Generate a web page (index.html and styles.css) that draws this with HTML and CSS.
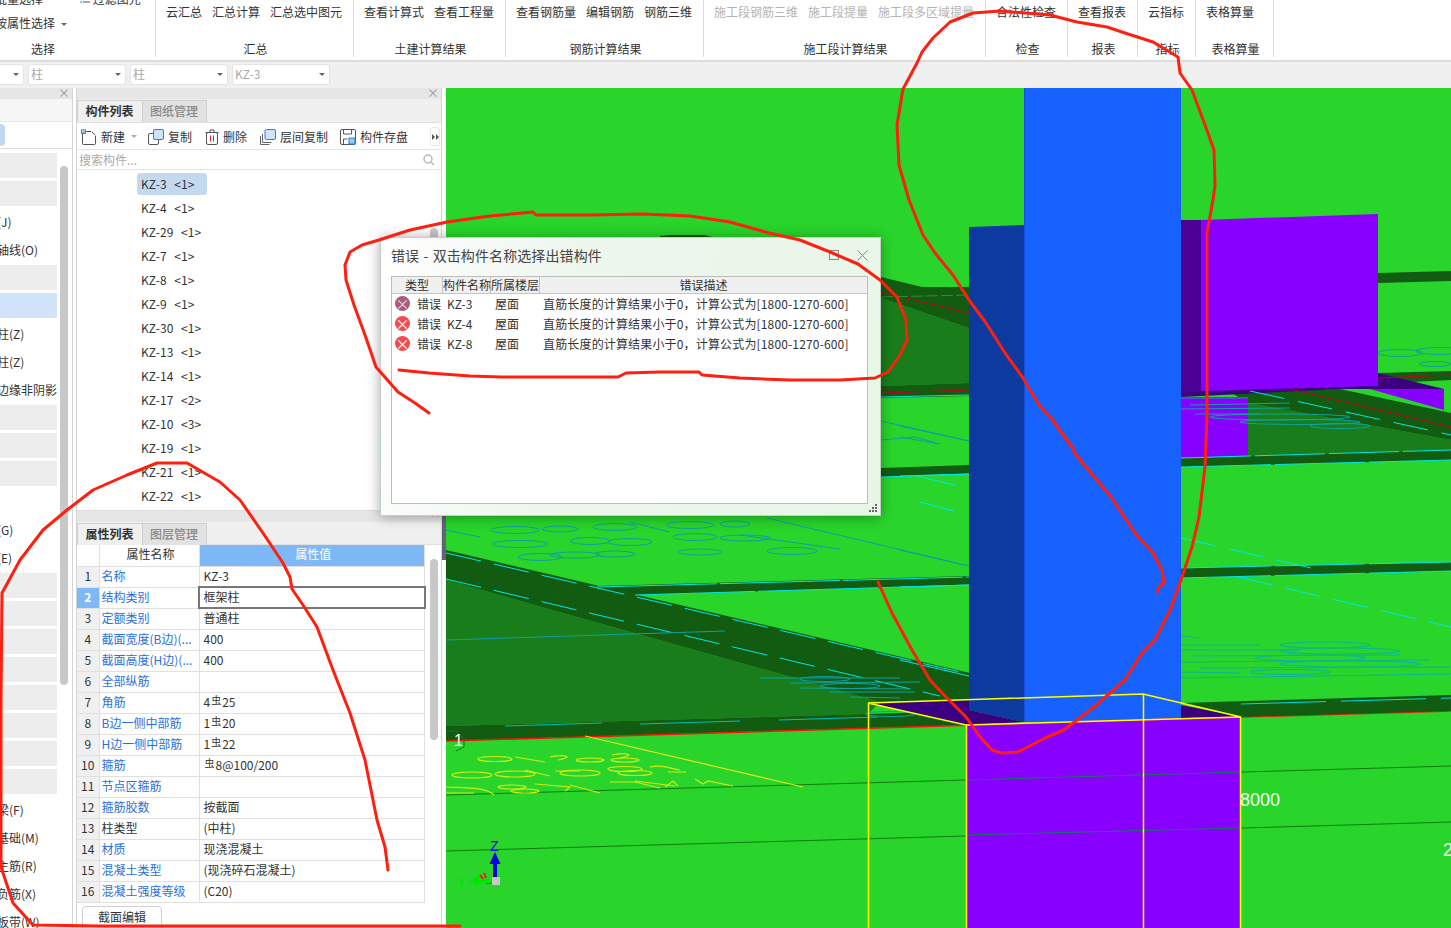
FILE: index.html
```html
<!DOCTYPE html>
<html lang="zh-CN">
<head>
<meta charset="utf-8">
<title>错误 - 双击构件名称选择出错构件</title>
<link rel="stylesheet" href="styles.css">
</head>
<body>
<div class="app">
  <header class="ribbon">
    <section class="group group-select">
      <div class="select-body">
        <div class="sel-col">
          <span class="clip-top">批量选择</span>
          <span>按属性选择 <i class="mini-caret"></i></span>
        </div>
        <div class="sel-col sel-col2">
          <span class="clip-top"><svg class="filter-ico" width="10" height="10" viewBox="0 0 10 10"><path d="M0 1h2M0 4h2M0 7h2" stroke="#2a7de1" fill="none"/><path d="M3 1h7M3 4h7M3 7h7" stroke="#555" fill="none"/></svg>过滤图元</span>
        </div>
      </div>
      <div class="group-label">选择</div>
    </section>
    <section class="group g-sum">
      <div class="group-body"><span>云汇总</span><span>汇总计算</span><span>汇总选中图元</span></div>
      <div class="group-label">汇总</div>
    </section>
    <section class="group g-civil">
      <div class="group-body"><span>查看计算式</span><span>查看工程量</span></div>
      <div class="group-label">土建计算结果</div>
    </section>
    <section class="group g-rebar">
      <div class="group-body"><span>查看钢筋量</span><span>编辑钢筋</span><span>钢筋三维</span></div>
      <div class="group-label">钢筋计算结果</div>
    </section>
    <section class="group g-stage">
      <div class="group-body disabled"><span>施工段钢筋三维</span><span>施工段提量</span><span>施工段多区域提量</span></div>
      <div class="group-label">施工段计算结果</div>
    </section>
    <section class="group g-check">
      <div class="group-body"><span>合法性检查</span></div>
      <div class="group-label">检查</div>
    </section>
    <section class="group g-report">
      <div class="group-body"><span>查看报表</span></div>
      <div class="group-label">报表</div>
    </section>
    <section class="group g-index">
      <div class="group-body"><span>云指标</span></div>
      <div class="group-label">指标</div>
    </section>
    <section class="group g-table">
      <div class="group-body"><span>表格算量</span></div>
      <div class="group-label">表格算量</div>
    </section>
  </header>

  <div class="filterbar">
    <div class="combo combo-first"><i class="mini-caret"></i></div>
    <div class="combo"><span>柱</span><i class="mini-caret"></i></div>
    <div class="combo"><span>柱</span><i class="mini-caret"></i></div>
    <div class="combo"><span>KZ-3</span><i class="mini-caret"></i></div>
  </div>

  <div class="main">
    <aside class="nav">
      <div class="panel-head"><span class="close">×</span></div>
      <div class="nav-strip"></div>
      <div class="nav-search"><div class="nav-pill"></div></div>
      <div class="nav-list">
        <div class="nav-row grey"></div>
        <div class="nav-row grey"></div>
        <div class="nav-row">轴网(J)</div>
        <div class="nav-row">辅助轴线(O)</div>
        <div class="nav-row grey"></div>
        <div class="nav-row active"></div>
        <div class="nav-row">构造柱(Z)</div>
        <div class="nav-row">砌体柱(Z)</div>
        <div class="nav-row">约束边缘非阴影区</div>
        <div class="nav-row grey"></div>
        <div class="nav-row grey"></div>
        <div class="nav-row grey"></div>
        <div class="nav-row"></div>
        <div class="nav-row">过梁(G)</div>
        <div class="nav-row">圈梁(E)</div>
        <div class="nav-row grey"></div>
        <div class="nav-row grey"></div>
        <div class="nav-row grey"></div>
        <div class="nav-row grey"></div>
        <div class="nav-row grey"></div>
        <div class="nav-row grey"></div>
        <div class="nav-row grey"></div>
        <div class="nav-row grey"></div>
        <div class="nav-row">基础梁(F)</div>
        <div class="nav-row">筏板基础(M)</div>
        <div class="nav-row">筏板主筋(R)</div>
        <div class="nav-row">筏板负筋(X)</div>
        <div class="nav-row">基础板带(W)</div>
      </div>
      <div class="thumb nav-thumb"></div>
    </aside>

    <div class="panels">
      <section class="panel panel-list">
        <div class="panel-head"><span class="close">×</span></div>
        <div class="tabs">
          <div class="tab on">构件列表</div>
          <div class="tab">图纸管理</div>
        </div>
        <div class="toolbar">
          <span class="tool tool-new">
            <svg width="16" height="17" viewBox="0 0 16 17"><path d="M1.5 3.5h9l4 4v8a1 1 0 0 1-1 1h-11a1 1 0 0 1-1-1z" fill="#fff" stroke="#555"/><path d="M10.5 3.5v4h4" fill="none" stroke="#fff"/><rect x="0" y="1" width="5" height="5" fill="#3f8ef0"/><path d="M1 2h1M3 2h1M2 3h1M1 4h1M3 4h1" stroke="#fff"/></svg>
            新建<i class="mini-caret pale"></i>
          </span>
          <span class="tool tool-copy">
            <svg width="16" height="16" viewBox="0 0 16 16"><rect x=".5" y="4.5" width="10" height="11" rx="1.5" fill="#fff" stroke="#555"/><rect x="5.5" y=".5" width="10" height="10" rx="1.5" fill="#cfe3fb" stroke="#2a7de1"/></svg>
            复制
          </span>
          <span class="tool tool-del">
            <svg width="14" height="16" viewBox="0 0 14 16"><path d="M.5 3.5h13M5 3.5V1h4v2.500" fill="none" stroke="#555"/><rect x="1.500" y="3.500" width="11" height="12" rx="1.500" fill="#fff" stroke="#555"/><path d="M5.500 6.500v6M8.500 6.500v6" stroke="#e02020"/></svg>
            删除
          </span>
          <span class="tool tool-floor">
            <svg width="16" height="16" viewBox="0 0 16 16"><path d="M.5 7v8.500h9M2.500 5v8.500h9" fill="none" stroke="#666"/><rect x="5" y=".5" width="10.500" height="10" rx="1.500" fill="#cfe3fb" stroke="#2a7de1"/></svg>
            层间复制
          </span>
          <span class="tool tool-save">
            <svg width="16" height="16" viewBox="0 0 16 16"><rect x=".5" y=".5" width="15" height="15" rx="1.500" fill="#fff" stroke="#555"/><path d="M3.500 1v4h8V1M3.500 15v-5h4" fill="none" stroke="#555"/><rect x="9" y="9" width="6" height="6" fill="#9cc6f5" stroke="#2a7de1"/></svg>
            构件存盘
          </span>
          <span class="more-btn"><svg width="7" height="6" viewBox="0 0 7 6"><path d="M0 0l3 3-3 3zM4 0l3 3-3 3z" fill="#555"/></svg></span>
        </div>
        <div class="search">
          <span>搜索构件...</span>
          <svg width="12" height="12" viewBox="0 0 12 12"><circle cx="5" cy="5" r="4" fill="none" stroke="#b5b5b5" stroke-width="1.400"/><path d="M8 8l3 3" stroke="#b5b5b5" stroke-width="1.400"/></svg>
        </div>
        <ul class="kz-list">
          <li class="sel">KZ-3  &lt;1&gt;</li>
          <li>KZ-4  &lt;1&gt;</li>
          <li>KZ-29  &lt;1&gt;</li>
          <li>KZ-7  &lt;1&gt;</li>
          <li>KZ-8  &lt;1&gt;</li>
          <li>KZ-9  &lt;1&gt;</li>
          <li>KZ-30  &lt;1&gt;</li>
          <li>KZ-13  &lt;1&gt;</li>
          <li>KZ-14  &lt;1&gt;</li>
          <li>KZ-17  &lt;2&gt;</li>
          <li>KZ-10  &lt;3&gt;</li>
          <li>KZ-19  &lt;1&gt;</li>
          <li>KZ-21  &lt;1&gt;</li>
          <li>KZ-22  &lt;1&gt;</li>
        </ul>
        <div class="thumb list-thumb"></div>
      </section>

      <section class="panel panel-props">
        <div class="panel-head"><span class="caret-up"></span></div>
        <div class="tabs tabs-props">
          <div class="tab on">属性列表</div>
          <div class="tab">图层管理</div>
        </div>
        <table class="props">
          <thead>
            <tr><th class="num"></th><th class="pname">属性名称</th><th class="pval">属性值</th></tr>
          </thead>
          <tbody>
            <tr><td class="num">1</td><td class="link">名称</td><td>KZ-3</td></tr>
            <tr class="cur"><td class="num">2</td><td class="link">结构类别</td><td class="edit">框架柱</td></tr>
            <tr><td class="num">3</td><td class="link">定额类别</td><td>普通柱</td></tr>
            <tr><td class="num">4</td><td class="link">截面宽度(B边)(...</td><td>400</td></tr>
            <tr><td class="num">5</td><td class="link">截面高度(H边)(...</td><td>400</td></tr>
            <tr><td class="num">6</td><td class="link">全部纵筋</td><td></td></tr>
            <tr><td class="num">7</td><td class="link">角筋</td><td>4<sup>虫</sup>25</td></tr>
            <tr><td class="num">8</td><td class="link">B边一侧中部筋</td><td>1<sup>虫</sup>20</td></tr>
            <tr><td class="num">9</td><td class="link">H边一侧中部筋</td><td>1<sup>虫</sup>22</td></tr>
            <tr><td class="num">10</td><td class="link">箍筋</td><td><sup>虫</sup>8@100/200</td></tr>
            <tr><td class="num">11</td><td class="link">节点区箍筋</td><td></td></tr>
            <tr><td class="num">12</td><td class="link">箍筋胶数</td><td>按截面</td></tr>
            <tr><td class="num">13</td><td>柱类型</td><td>(中柱)</td></tr>
            <tr><td class="num">14</td><td class="link">材质</td><td>现浇混凝土</td></tr>
            <tr><td class="num">15</td><td class="link">混凝土类型</td><td>(现浇碎石混凝土)</td></tr>
            <tr><td class="num">16</td><td class="link">混凝土强度等级</td><td>(C20)</td></tr>
          </tbody>
        </table>
        <div class="thumb props-thumb"></div>
        <div class="props-foot"><button class="sec-btn">截面编辑</button></div>
      </section>
    </div>

    <div class="gap"><div class="gap-mark"></div></div>

    <div class="viewport">
      <svg class="scene" width="1005" height="840" viewBox="446 88 1005 840">
        <rect x="446" y="88" width="1005" height="840" fill="#29d42b"/>
        <!-- slabs and beams -->
        <polygon points="660,236 670,235 705,235 712,237 660,237" fill="#125c11"/>
        <polygon points="446,580 880,702 868,714 446,726" fill="#187d1a"/>
        <polygon points="446,550 970,673 970,700 880,702 446,580" fill="#125c11"/>
        <polygon points="446,726 970,711 970,725 446,741" fill="#125c11"/>
        <polygon points="597,586 970,576 970,585 635,595" fill="#125c11"/>
        <polygon points="1181,568 1451,562 1451,571 1181,578" fill="#125c11"/>
        <polygon points="881,298 969,328 969,383 881,386" fill="#187d1a"/>
        <polygon points="881,277 922,287 969,287 969,328 881,298" fill="#125c11"/>
        <polygon points="881,386 969,383 969,396 881,398" fill="#125c11"/>
        <polygon points="881,468 969,465 969,474 881,477" fill="#125c11"/>
        <polygon points="1378,273 1451,271 1451,281 1378,283" fill="#125c11"/>
        <polygon points="1378,373 1451,371 1451,380 1410,382" fill="#125c11"/>
        <polygon points="1248,403 1451,440 1451,450 1248,457" fill="#187d1a"/>
        <polygon points="1181,458 1451,450 1451,460 1181,467" fill="#125c11"/>
        <polygon points="1230,392 1340,389 1451,413 1451,440 1248,403" fill="#125c11"/>
        <!-- purple wall -->
        <polygon points="1181,397 1248,397 1248,456 1181,458" fill="#8800ff"/>
        <polygon points="1370,389 1444,389 1444,410" fill="#8800ff"/>
        <polygon points="1181,390 1378,373 1444,389 1340,389 1181,397" fill="#3a0080"/>
        <polygon points="1181,220 1201,220 1201,392 1181,393" fill="#4b0096"/>
        <polygon points="1201,220 1378,214 1378,386 1201,391" fill="#8800ff"/>
        <!-- column -->
        <polygon points="969,227 1024,225 1024,722 969,710" fill="#0c3a9e"/>
        <rect x="1024" y="88" width="157" height="634" fill="#1761ff"/>
        <line x1="1024.500" y1="88" x2="1024.500" y2="722" stroke="#1250d8"/>
        <!-- lines over slabs -->
        <g fill="none" stroke="#00e6e6" stroke-width="1">
          <line x1="446" y1="553" x2="960" y2="672" stroke-dasharray="36 13"/>
          <line x1="446" y1="579" x2="940" y2="696" stroke-dasharray="36 13"/>
          <line x1="597" y1="587" x2="969" y2="577" stroke-dasharray="120 3"/>
          <line x1="635" y1="595" x2="969" y2="585" stroke-dasharray="120 3"/>
          <line x1="1181" y1="568" x2="1451" y2="562" stroke-dasharray="90 4"/>
          <line x1="1181" y1="578" x2="1451" y2="571" stroke-dasharray="90 4"/>
          <line x1="1181" y1="538" x2="1320" y2="570" stroke-dasharray="35 14"/>
          <line x1="1238" y1="577" x2="1451" y2="627" stroke-dasharray="35 14"/>
          <line x1="1181" y1="458" x2="1451" y2="450" stroke-dasharray="70 4"/>
          <line x1="1181" y1="467" x2="1451" y2="460" stroke-dasharray="90 4"/>
          <line x1="1250" y1="391" x2="1451" y2="435" stroke-dasharray="35 14"/>
          <line x1="900" y1="476" x2="969" y2="474"/>
          <line x1="881" y1="397" x2="969" y2="395"/>
          <line x1="881" y1="477" x2="969" y2="474"/>
          <line x1="917" y1="476" x2="955" y2="485"/>
          <line x1="920" y1="502" x2="954" y2="511"/>
          <line x1="900" y1="587" x2="969" y2="585"/>
          <line x1="900" y1="660" x2="969" y2="676"/>
          <line x1="505" y1="726" x2="602" y2="723" stroke="#00bcbc"/>
          <line x1="640" y1="724" x2="740" y2="721" stroke="#00bcbc"/>
          <line x1="779" y1="720" x2="878" y2="717" stroke="#00bcbc"/>
        </g>
        <g fill="none" stroke="#0fa0a0" stroke-width="1">
          <line x1="446" y1="640" x2="725" y2="631"/>
          <line x1="767" y1="518" x2="969" y2="566"/>
          <line x1="900" y1="426" x2="969" y2="441"/>
          <line x1="900" y1="437" x2="940" y2="444"/>
          <line x1="900" y1="550" x2="969" y2="566"/>
          <line x1="881" y1="421" x2="969" y2="441"/>
          <line x1="881" y1="440" x2="915" y2="437"/>
          <line x1="915" y1="437" x2="940" y2="444"/>
          <ellipse cx="515" cy="530" rx="24" ry="3.500"/>
          <ellipse cx="560" cy="529" rx="18" ry="3"/>
          <ellipse cx="615" cy="527" rx="22" ry="3.500"/>
          <ellipse cx="690" cy="525" rx="24" ry="3.500"/>
          <ellipse cx="735" cy="524" rx="15" ry="3"/>
          <ellipse cx="520" cy="544" rx="28" ry="3.500"/>
          <ellipse cx="590" cy="541" rx="20" ry="3.500"/>
          <ellipse cx="630" cy="542" rx="22" ry="3.500"/>
          <ellipse cx="695" cy="537" rx="22" ry="3.500"/>
          <ellipse cx="745" cy="538" rx="25" ry="3"/>
          <ellipse cx="540" cy="557" rx="22" ry="3.500"/>
          <ellipse cx="575" cy="555" rx="25" ry="3"/>
          <ellipse cx="615" cy="554" rx="20" ry="3"/>
          <ellipse cx="700" cy="552" rx="22" ry="3"/>
          <ellipse cx="792" cy="551" rx="25" ry="3.500"/>
          <line x1="446" y1="530" x2="480" y2="537"/>
          <line x1="630" y1="522" x2="670" y2="532"/>
          <line x1="740" y1="535" x2="840" y2="549"/>
          <line x1="760" y1="678" x2="900" y2="678"/>
          <line x1="790" y1="683" x2="920" y2="682"/>
          <line x1="800" y1="688" x2="910" y2="689"/>
          <line x1="830" y1="692" x2="915" y2="692"/>
          <line x1="850" y1="697" x2="900" y2="698"/>
          <ellipse cx="825" cy="679" rx="25" ry="2.500"/>
          <ellipse cx="850" cy="686" rx="30" ry="2.500"/>
          <ellipse cx="1400" cy="353" rx="22" ry="3.500"/>
          <ellipse cx="1440" cy="351" rx="24" ry="3.500"/>
          <ellipse cx="1435" cy="364" rx="16" ry="2.500"/>
          <line x1="1181" y1="398" x2="1248" y2="398"/>
          <line x1="1190" y1="405" x2="1290" y2="403"/>
          <line x1="1181" y1="409" x2="1290" y2="408"/>
          <line x1="1195" y1="414" x2="1260" y2="414"/>
          <ellipse cx="1280" cy="417" rx="70" ry="3"/>
          <ellipse cx="1300" cy="422" rx="60" ry="2.500"/>
          <ellipse cx="1340" cy="426" rx="30" ry="2.500"/>
          <g stroke="#0cb49c">
            <ellipse cx="1325" cy="645" rx="45" ry="3"/>
            <line x1="1181" y1="645" x2="1260" y2="645"/>
            <line x1="1181" y1="650" x2="1300" y2="650"/>
            <ellipse cx="1340" cy="651" rx="60" ry="3"/>
            <line x1="1190" y1="656" x2="1400" y2="655"/>
            <ellipse cx="1310" cy="658" rx="55" ry="3"/>
            <line x1="1181" y1="662" x2="1430" y2="660"/>
            <ellipse cx="1350" cy="664" rx="70" ry="3"/>
            <line x1="1200" y1="668" x2="1451" y2="667"/>
            <ellipse cx="1290" cy="672" rx="40" ry="2.500"/>
            <line x1="1181" y1="672" x2="1240" y2="673"/>
            <line x1="1181" y1="678" x2="1451" y2="674"/>
            <line x1="1181" y1="636" x2="1200" y2="638"/>
          </g>
          <ellipse cx="890" cy="714" rx="25" ry="2.500"/>
          <ellipse cx="940" cy="712" rx="22" ry="2.500"/>
        </g>
        <g fill="none" stroke="#c4001a" stroke-width="1">
          <line x1="881" y1="292" x2="969" y2="313"/>
          <line x1="881" y1="393" x2="969" y2="390"/>
          <line x1="1290" y1="389" x2="1451" y2="427"/>
          <line x1="1378" y1="378" x2="1451" y2="375"/>
        </g>
        <line x1="881" y1="297" x2="969" y2="295" stroke="#2e8f2e" stroke-dasharray="12 3"/>
        <line x1="446" y1="795" x2="1451" y2="766" stroke="#0f7d10"/>
        <line x1="446" y1="851" x2="1451" y2="822" stroke="#0f7d10"/>
        <!-- block under the column -->
        <polygon points="868,703 969,700 969,710 1024,722 966,725" fill="#3a0080"/>
        <polygon points="1181,705 1241,717 1181,719" fill="#3a0080"/>
        <polygon points="966,725 1241,717 1241,928 966,928" fill="#8800ff"/>
        <line x1="966" y1="780" x2="1241" y2="772" stroke="#127a50"/>
        <line x1="966" y1="835" x2="1241" y2="828" stroke="#127a50"/>
        <line x1="446" y1="741" x2="1241" y2="717" stroke="#ff1010" stroke-width="1.500"/>
        <line x1="1241" y1="717" x2="1451" y2="711" stroke="#ff1010" stroke-width="1.500"/>
        <polygon points="1241,717 1451,711 1451,695 1181,703 1241,717" fill="#125c11"/>
        <line x1="1241" y1="704" x2="1451" y2="698" stroke="#00dcdc" stroke-dasharray="85 15"/>
        <g fill="none" stroke="#ffff00">
          <path d="M868 703L1143 694L1241 717L966 725Z" stroke-width="1.500"/>
          <path d="M868.500 703V928M966.500 725V928M1143.500 694V928M1240.500 717V928" stroke-width="1.500"/>
        </g>
        <!-- plan labels on the floor -->
        <g fill="none" stroke="#d2ea14" stroke-width="1.200">
          <line x1="585" y1="736" x2="803" y2="787" stroke="#e6e619"/>
          <ellipse cx="495" cy="759" rx="17" ry="2.500"/>
          <path d="M515 757l30 5M550 757c15-3 25 0 8 3"/>
          <ellipse cx="590" cy="760" rx="14" ry="2"/>
          <path d="M612 755c15-3 25 0 8 3"/>
          <ellipse cx="625" cy="760" rx="14" ry="2"/>
          <ellipse cx="472" cy="775" rx="20" ry="3"/>
          <ellipse cx="515" cy="774" rx="20" ry="3"/>
          <path d="M525 770l25 6M555 771h25"/>
          <ellipse cx="580" cy="773" rx="20" ry="3"/>
          <ellipse cx="625" cy="769" rx="17" ry="2.500"/>
          <ellipse cx="635" cy="773" rx="17" ry="2.500"/>
          <path d="M650 767c15-3 20 2 30 3M668 772h18"/>
          <path d="M446 787c20 1 40 0 48 8M446 793h28"/>
          <ellipse cx="512" cy="787" rx="14" ry="2"/>
          <ellipse cx="525" cy="791" rx="14" ry="2"/>
          <path d="M535 784l35 3 -5 4M570 785l30 8M610 782h25l25 6M635 781l40 5M665 787l8-6 5 5M695 779l8 5 5-3 25 5"/>
        </g>
        <path d="M446 731h10l8 8v8l-8 4" fill="none" stroke="#0f7d10"/>
        <text x="454" y="746" class="scene-num n1">1</text>
        <text x="1240" y="806" class="scene-num">8000</text>
        <text x="1443" y="856" class="scene-num">2</text>
        <!-- axis gizmo -->
        <text x="490" y="851" class="axis axis-z">Z</text>
        <text x="457" y="886" class="axis axis-y">Y</text>
        <path d="M495 877V862" stroke="#0000e6" stroke-width="4"/>
        <path d="M495 852l-5.500 12h11z" fill="#0000e6"/>
        <path d="M480 875l3 4M484 873l2 5M481 880h9l2 3h-6" fill="none" stroke="#ff1010" stroke-width="2"/>
        <path d="M492 881H478" stroke="#00e600" stroke-width="4"/>
        <path d="M469 881l10-5v10z" fill="#00e600"/>
        <rect x="492" y="877" width="8" height="8" fill="#c8c8c8"/>
      </svg>
    </div>
  </div>

  <div class="dialog">
    <div class="dlg-title">
      <span class="dlg-text">错误 - 双击构件名称选择出错构件</span>
      <span class="dlg-btns">
        <svg width="10" height="10" viewBox="0 0 10 10"><rect x=".5" y=".5" width="9" height="9" fill="none" stroke="#888"/></svg>
        <svg width="11" height="11" viewBox="0 0 11 11"><path d="M.5 .5l10 10M10.500 .5l-10 10" stroke="#888" fill="none"/></svg>
      </span>
    </div>
    <div class="dlg-table">
      <div class="dlg-head">
        <span class="c1">类型</span><span class="c2">构件名称</span><span class="c3">所属楼层</span><span class="c4">错误描述</span>
      </div>
      <div class="dlg-row">
        <span class="err-ico first">×</span><span class="c-type">错误</span><span class="c-name">KZ-3</span><span class="c-floor">屋面</span><span class="c-desc">直筋长度的计算结果小于0，计算公式为[1800-1270-600]</span>
      </div>
      <div class="dlg-row">
        <span class="err-ico">×</span><span class="c-type">错误</span><span class="c-name">KZ-4</span><span class="c-floor">屋面</span><span class="c-desc">直筋长度的计算结果小于0，计算公式为[1800-1270-600]</span>
      </div>
      <div class="dlg-row">
        <span class="err-ico">×</span><span class="c-type">错误</span><span class="c-name">KZ-8</span><span class="c-floor">屋面</span><span class="c-desc">直筋长度的计算结果小于0，计算公式为[1800-1270-600]</span>
      </div>
    </div>
    <svg class="grip" width="8" height="8" viewBox="0 0 8 8"><path d="M6 0h2v2H6zM3 3h2v2H3zM6 3h2v2H6zM0 6h2v2H0zM3 6h2v2H3zM6 6h2v2H6z" fill="#666"/></svg>
  </div>

  <svg class="ink" width="1451" height="928" viewBox="0 0 1451 928">
    <polyline points="429,413 415,403 398,392 376,367 365,335 354,305 346,280 345,265 350,252 362,245 379,240 410,230 447,222 490,216 533,212 536,215 590,215 643,214 690,216 730,222 769,233 800,240 830,252 858,264 880,280 897,297 906,320 907,340 900,355 888,372 875,378 840,380 790,380 740,378 702,375 699,372 660,372 626,373 618,377 560,377 501,377 470,376 429,373 399,370"/>
    <polyline points="1158,592 1158,588 1164,583 1162,570 1153,553 1135,533 1111,497 1076,455 1072,447 1051,418 1039,405 1023,378 1005,353 986,323 969,300 953,275 935,253 923,235 909,200 899,165 897,125 903,89 917,63 922,52 933,38 950,22 973,13 1000,11 1050,15 1077,22 1107,27 1125,33 1153,42 1178,57 1180,73 1192,90 1205,125 1214,150 1215,185 1213,200 1207,233 1207,383 1207,417 1205,467 1199,517 1192,547 1181,580 1171,608 1155,640 1142,653 1125,680 1094,707 1064,730 1045,738 1018,752 1001,753 992,750 981,738 966,717 947,698 930,680 912,650 892,613 878,582"/>
    <polyline points="388,870 385,847 377,820 367,770 365,760 350,713 333,670 317,627 303,605 292,589 290,577 283,563 263,533 240,500 220,482 187,463 157,463 127,475 93,490 67,510 43,530 20,560 2,593 1,700 1,867 13,903 33,925 100,926 300,926 460,926"/>
  </svg>
</div>
</body>
</html>
```

FILE: styles.css
```css
* { box-sizing: border-box; }
html, body { margin: 0; padding: 0; }
body { background: #fff; font-family: "Noto Sans CJK SC", "Noto Sans", sans-serif; font-size: 12px; color: #333; }
.app { position: relative; width: 1451px; height: 928px; overflow: hidden; display: flex; flex-direction: column; }

/* ribbon */
.ribbon { display: flex; height: 62px; flex: none; background: #fff; border-bottom: 2px solid #dcdcdc; }
.group { flex: none; height: 57px; border-right: 1px solid #dcdcdc; display: flex; flex-direction: column; padding-top: 3px; }
.group-body { display: flex; gap: 10px; padding-left: 10px; height: 18px; line-height: 18px; white-space: nowrap; }
.group-body.disabled { color: #b4b4b4; }
.group-label { margin-top: auto; height: 16px; line-height: 16px; padding-left: 2px; text-align: center; white-space: nowrap; }
.group-select { width: 227px; margin-left: -71px; }
.select-body { position: relative; display: flex; height: 32px; margin-top: -13px; padding-left: 66px; gap: 13px; }
.sel-col { display: flex; flex-direction: column; gap: 6px; line-height: 18px; white-space: nowrap; }
.clip-top { display: block; }
.filter-ico { margin-right: 3px; vertical-align: -1px; }
.g-sum { width: 198px; }
.g-civil { width: 152px; }
.g-rebar { width: 198px; }
.g-stage { width: 282px; }
.g-check { width: 82px; }
.g-report { width: 70px; }
.g-index { width: 58px; }
.g-table { width: 78px; }
.mini-caret { display: inline-block; width: 0; height: 0; border-left: 3px solid transparent; border-right: 3px solid transparent; border-top: 3px solid #666; vertical-align: 2px; margin-left: 3px; }
.mini-caret.pale { border-top-color: #aaa; margin-left: 6px; }

/* filter bar */
.filterbar { flex: none; height: 26px; background: #f0f0f0; display: flex; gap: 4px; padding-top: 2px; }
.combo { width: 98px; height: 21px; background: #fff; border: 1px solid #e4e4e4; border-radius: 3px; color: #aaa; display: flex; align-items: center; justify-content: space-between; padding: 0 4px 1px 2px; line-height: 18px; }
.combo-first { width: 94px; margin-left: -70px; justify-content: flex-end; }

/* layout */
.main { flex: 1; min-height: 0; display: flex; }
.panel-head { height: 11px; background: #e6e6e6; position: relative; flex: none; }
.close { position: absolute; right: 2px; top: -3px; color: #999; font-size: 12px; line-height: 16px; }
.thumb { position: absolute; width: 8px; background: #c8c8c8; border-radius: 4px; }

/* nav */
.nav { position: relative; flex: none; width: 73px; overflow: hidden; border-right: 1px solid #d4d4d4; background: #fff; }
.nav-strip { height: 23px; background: #f6f6f6; border-bottom: 1px solid #e6e6e6; }
.nav-search { height: 27px; border-bottom: 1px solid #ddd; padding-top: 2px; }
.nav-pill { width: 5px; height: 22px; background: #c3d9f0; border-radius: 0 4px 4px 0; }
.nav-list { padding-top: 4px; }
.nav-row { width: 84px; height: 25px; margin: 0 0 3px -27px; line-height: 25px; white-space: nowrap; overflow: hidden; }
.nav-row.grey { background: #ededed; }
.nav-row.active { background: #d2e4fb; }
.nav-thumb { left: 60px; top: 78px; height: 519px; }

/* panels */
.panels { flex: none; width: 366px; margin-left: 3px; display: flex; flex-direction: column; }
.panel { position: relative; display: flex; flex-direction: column; border-left: 1px solid #d4d4d4; border-right: 1px solid #d4d4d4; background: #fff; }
.panel-list { height: 423px; flex: none; }
.panel-props { flex: 1; min-height: 0; }
.tabs { flex: none; height: 24px; display: flex; background: #f0f0f0; border-bottom: 1px solid #e0e0e0; padding-top: 1px; }
.tabs-props { height: 23px; }
.tab { width: 65px; height: 22px; line-height: 20px; padding-right: 1px; text-align: center; color: #8a8a8a; background: #e2e2e2; border: 1px solid #cfcfcf; border-bottom: 0; font-weight: 500; }
.tab.on { color: #333; background: #f0f0f0; font-weight: 700; border-right: 0; }
.toolbar { flex: none; height: 27px; display: flex; align-items: center; border-bottom: 1px solid #e4e4e4; padding: 1px 0 0 4px; white-space: nowrap; }
.tool { display: flex; align-items: center; gap: 4px; }
.tool .mini-caret { margin-left: 2px; }
.tool-new { width: 67px; }
.tool-copy { width: 57px; }
.tool-del { width: 55px; }
.tool-floor { width: 80px; }
.tool-save { width: 90px; }
.tool svg { flex: none; }
.more-btn { width: 10px; height: 19px; border: 1px solid #e8e8e8; border-radius: 3px; display: flex; align-items: center; justify-content: center; }
.search { flex: none; height: 20px; display: flex; align-items: center; justify-content: space-between; padding: 0 6px 0 2px; color: #aaa; border-bottom: 1px solid #e4e4e4; }
.kz-list { list-style: none; margin: 0; padding: 3px 0 0 60px; flex: 1; min-height: 0; overflow: hidden; border-bottom: 1px solid #ddd; }
.kz-list li { width: 70px; height: 22px; margin-bottom: 2px; line-height: 21px; padding-left: 4px; white-space: pre; border-radius: 3px; font-size: 12px; word-spacing: 1px; letter-spacing: .1px; }
.kz-list li.sel { background: #c3d9f0; }
.list-thumb { left: 353px; top: 140px; height: 14px; }

/* property table */
.props { border-collapse: collapse; table-layout: fixed; width: 348px; flex: none; }
.props th, .props td { height: 21px; padding: 0 0 2px 3px; border: 1px solid #e0e0e0; font-weight: 400; text-align: left; white-space: nowrap; overflow: hidden; line-height: 18px; }
.props td:nth-child(2) { padding-left: 2px; }
.props td:last-child { padding-left: 4px; }
.props th { border-top: 0; background: #fff; text-align: center; }
.props .num { width: 22px; padding: 0 0 1px; text-align: center; background: #f0f0f0; border-left: 0; font-size: 12px; }
.props th.num { background: #fff; }
.props .pname { width: 100px; }
.props th.pval { background: #7fb8f7; color: #fff; }
.props .link { color: #2a6fe0; }
.props tr.cur .num { background: #7fb8f7; color: #fff; font-weight: 700; }
.props td.edit { outline: 2px solid #777; outline-offset: -1px; }
.props sup { font-size: 10px; line-height: 0; vertical-align: 3px; margin: 0 1px; }
.props-thumb { left: 353px; top: 48px; height: 181px; }
.props-foot { flex: 1; padding: 3px 0 0 5px; background: #fff; }
.sec-btn { width: 80px; height: 30px; background: #fff; border: 1px solid #d0d0d0; border-radius: 4px 4px 0 0; font: inherit; color: #333; padding: 0 0 8px; }
.caret-up { position: absolute; right: 3px; top: 3px; width: 5px; height: 5px; border-left: 1px solid #bbb; border-top: 1px solid #bbb; transform: rotate(45deg); }

/* gap and canvas */
.gap { flex: none; width: 4px; background: #fff; padding-top: 427px; }
.gap-mark { height: 45px; background: #5f6572; }
.viewport { flex: 1; min-width: 0; overflow: hidden; }
.scene { display: block; }
.scene-num { fill: #f4fff4; font-family: "Liberation Sans", sans-serif; font-size: 18px; }
.n1 { font-size: 16px; }
.axis { font-family: "Liberation Sans", sans-serif; font-size: 14px; }
.axis-z { fill: #0000e6; }
.axis-y { fill: #00e600; }

/* dialog */
.dialog { position: absolute; left: 380px; top: 237px; width: 501px; height: 279px; background: linear-gradient(100deg, #ffffff 0%, #eef6ee 35%, #e8f6e8 100%); border: 1px solid #c4d0c4; box-shadow: 0 1px 12px rgba(0, 0, 0, .35); }
.dlg-title { height: 38px; display: flex; align-items: center; justify-content: space-between; padding: 0 12px 4px 10px; font-size: 14px; color: #444; }
.dlg-text { word-spacing: 1px; letter-spacing: .1px; }
.dlg-btns { display: flex; gap: 18px; align-items: center; }
.dlg-table { margin-left: 10px; width: 477px; height: 228px; background: #fff; border: 1px solid #bdbdbd; }
.dlg-head { height: 17px; display: flex; background: #f0f0f0; border-bottom: 1px solid #c4c4c4; line-height: 16px; text-align: center; }
.dlg-head span { border-right: 1px solid #c4c4c4; white-space: nowrap; }
.dlg-head .c1 { width: 51px; }
.dlg-head .c2 { width: 48px; }
.dlg-head .c3 { width: 49px; }
.dlg-head .c4 { flex: 1; border-right: 0; }
.dlg-row { height: 20px; display: flex; align-items: center; padding-left: 3px; white-space: nowrap; }
.dlg-row:nth-child(2) { margin-top: -1px; }
.err-ico { width: 15px; height: 15px; border-radius: 50%; background: #f44a4f; color: #fff; font-size: 14px; line-height: 14px; text-align: center; margin-right: 7px; flex: none; }
.err-ico.first { background: #ad5a7c; color: #ddd; }
.c-type { width: 30px; }
.c-name { width: 48px; }
.c-floor { width: 48px; }
.c-desc { letter-spacing: .16px; }
.grip { position: absolute; right: 3px; bottom: 3px; }

/* hand-drawn annotation layer */
.ink { position: absolute; left: 0; top: 0; pointer-events: none; }
.ink polyline { fill: none; stroke: #ff1f10; stroke-width: 3; stroke-linejoin: round; stroke-linecap: round; }
```
